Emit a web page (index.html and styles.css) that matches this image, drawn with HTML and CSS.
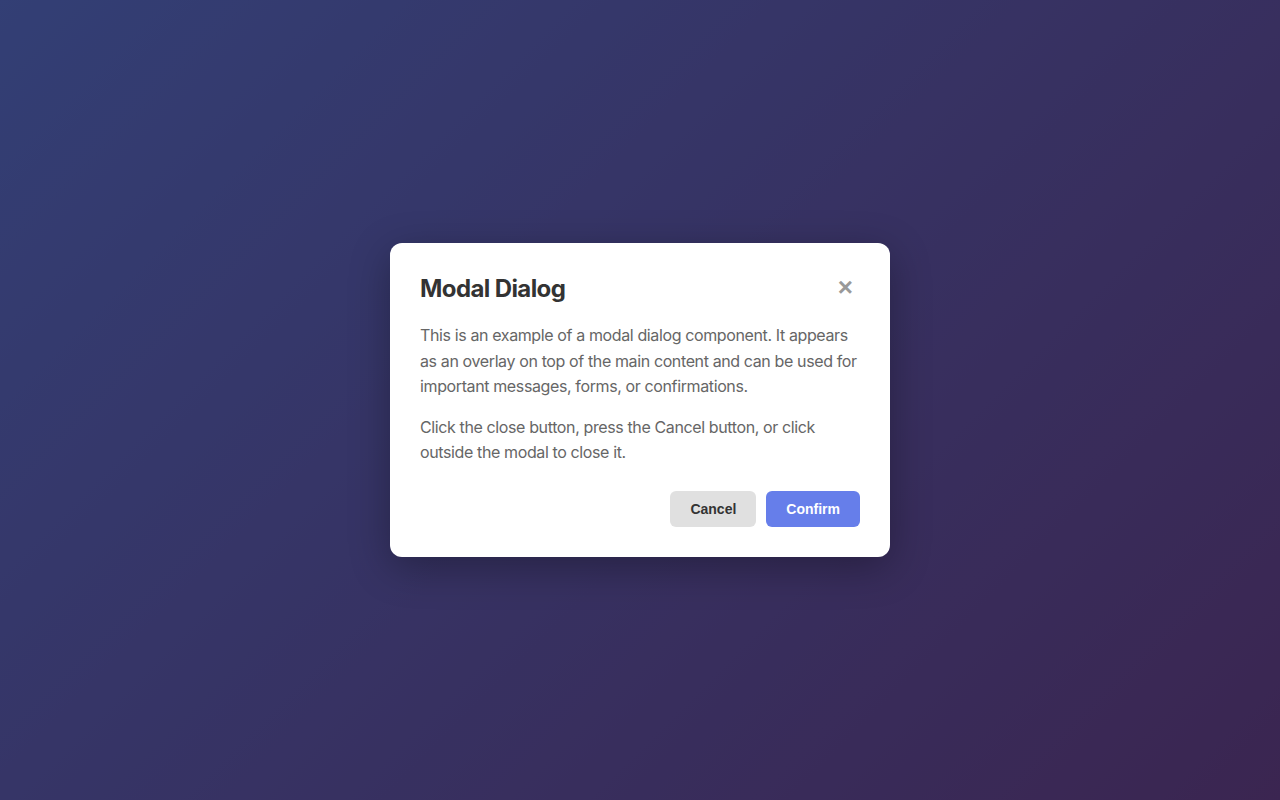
FILE: index.html
```html
<!DOCTYPE html>
<html lang="en">
<head>
<meta charset="utf-8">
<title>Modal Dialog</title>
<link rel="stylesheet" href="styles.css">
</head>
<body>
<div class="page">
  <div class="overlay">
    <div class="modal" role="dialog" aria-labelledby="modal-title">
      <div class="modal-header">
        <h2 class="modal-title" id="modal-title">Modal Dialog</h2>
        <button class="close-btn" aria-label="Close">&times;</button>
      </div>
      <div class="modal-body">
        <p>This is an example of a modal dialog component. It appears as an overlay on top of the main content and can be used for important messages, forms, or confirmations.</p>
        <p>Click the close button, press the Cancel button, or click outside the modal to close it.</p>
      </div>
      <div class="modal-footer">
        <button class="btn btn-cancel">Cancel</button>
        <button class="btn btn-confirm">Confirm</button>
      </div>
    </div>
  </div>
</div>
</body>
</html>
```
FILE: styles.css
```css
* { box-sizing: border-box; }
html, body { margin: 0; height: 100%; }
body {
  font-family: Inter, "Noto Sans", sans-serif;
  background: linear-gradient(135deg, #667eea 0%, #764ba2 100%);
}
.page { width: 100%; height: 100vh; }
.overlay {
  width: 100%;
  height: 100%;
  background: rgba(0, 0, 0, 0.5);
  display: flex;
  align-items: center;
  justify-content: center;
}
.modal {
  width: 500px;
  background: #fff;
  border-radius: 12px;
  padding: 31px 30px 30px;
  box-shadow: 0 10px 40px rgba(0, 0, 0, 0.3);
}
.modal-header {
  display: flex;
  justify-content: space-between;
  align-items: center;
  height: 29px;
  margin-bottom: 20px;
}
.modal-title {
  margin: 0;
  font-size: 24px;
  font-weight: 700;
  letter-spacing: -0.6px;
  color: #333;
  line-height: 29px;
}
.close-btn {
  background: none;
  border: none;
  padding: 0 7px 4px 6px;
  font-family: "Liberation Sans", Arial, sans-serif;
  font-size: 26px;
  font-weight: 700;
  line-height: 1;
  color: #999;
  cursor: pointer;
}
.modal-body p {
  margin: 0 0 15px;
  font-size: 16px;
  line-height: 1.6;
  letter-spacing: -0.38px;
  color: #666;
}
.modal-body p:last-child { margin-bottom: 0; }
.modal-footer {
  display: flex;
  justify-content: flex-end;
  gap: 10px;
  margin-top: 25px;
}
.btn {
  font-family: "Liberation Sans", Arial, sans-serif;
  font-size: 14px;
  font-weight: 700;
  height: 36px;
  padding: 0 20px;
  border: none;
  border-radius: 6px;
  cursor: pointer;
}
.btn-cancel { background: #e0e0e0; color: #333; }
.btn-confirm { background: #667eea; color: #fff; }
```
